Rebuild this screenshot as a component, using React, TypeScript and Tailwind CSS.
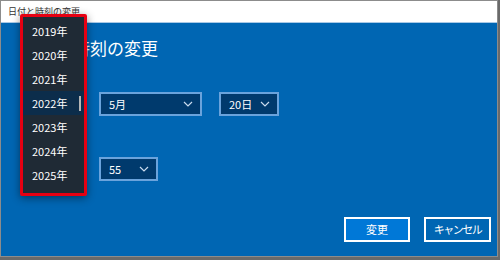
import React from "react";

const font = { fontFamily: '"Noto Sans CJK JP", "Noto Sans", sans-serif' };

function Chevron() {
  return (
    <svg width="10" height="6" viewBox="0 0 10 6" className="shrink-0">
      <polyline points="1,1 5,5 9,1" fill="none" stroke="#c9dbee" strokeWidth="1.2" />
    </svg>
  );
}

function Combo({ label, w }: { label: string; w: string }) {
  return (
    <div
      className={`${w} h-[24px] border-2 border-[#6aa3dc] bg-[#003a6d] flex items-center justify-between pl-[8px] pr-[7px] text-white text-[11px]`}
    >
      <span>{label}</span>
      <Chevron />
    </div>
  );
}

export default function App() {
  const years = ["2019年", "2020年", "2021年", "2022年", "2023年", "2024年", "2025年"];
  return (
    <div className="w-[500px] h-[260px] bg-[#6a6a6a] relative overflow-hidden" style={font}>
      <div className="w-[498px] h-[257px] border border-[#8c8c8c] bg-[#0066b3] flex flex-col">
        <div className="h-[22px] bg-white border-b border-[#a9c9e6] flex items-center pl-[7px] text-[9px] text-[#333] shrink-0">
          日付と時刻の変更
        </div>
        <div className="pl-[21px] pt-[16px] text-[17px] leading-[17px] text-white">日付と時刻の変更</div>
        <div className="flex gap-[17px] pl-[98px] mt-[36px]">
          <Combo label="5月" w="w-[103px]" />
          <Combo label="20日" w="w-[60px]" />
        </div>
        <div className="flex pl-[98px] mt-[41px]">
          <Combo label="55" w="w-[59px]" />
        </div>
        <div className="flex justify-end gap-[14px] pr-[6px] mt-[36px]">
          <div className="w-[66px] h-[25px] border-2 border-white bg-[#0078d7] text-white text-[11px] flex items-center justify-center">
            変更
          </div>
          <div className="w-[67px] h-[25px] border-2 border-white bg-[#0066b3] text-white text-[11px] tracking-[-1.5px] flex items-center justify-center">
            キャンセル
          </div>
        </div>
      </div>

      <div className="absolute left-[20px] top-[14px] w-[67px] h-[182px] border-[3px] border-[#e60012] rounded-[2px] shadow-[0_2px_8px_rgba(0,0,0,0.45)]">
        <div className="relative w-full h-full bg-[#1f2a35] pt-[2px] flex flex-col">
          {years.map((y) => (
            <div
              key={y}
              className={`h-[24px] flex items-center pl-[9px] text-[11px] text-white ${
                y === "2022年" ? "bg-[#0c2d4b]" : ""
              }`}
            >
              {y}
            </div>
          ))}
          <div className="absolute left-[56px] top-[79px] w-[2px] h-[15px] bg-[#b5b5b5]" />
        </div>
      </div>
    </div>
  );
}
